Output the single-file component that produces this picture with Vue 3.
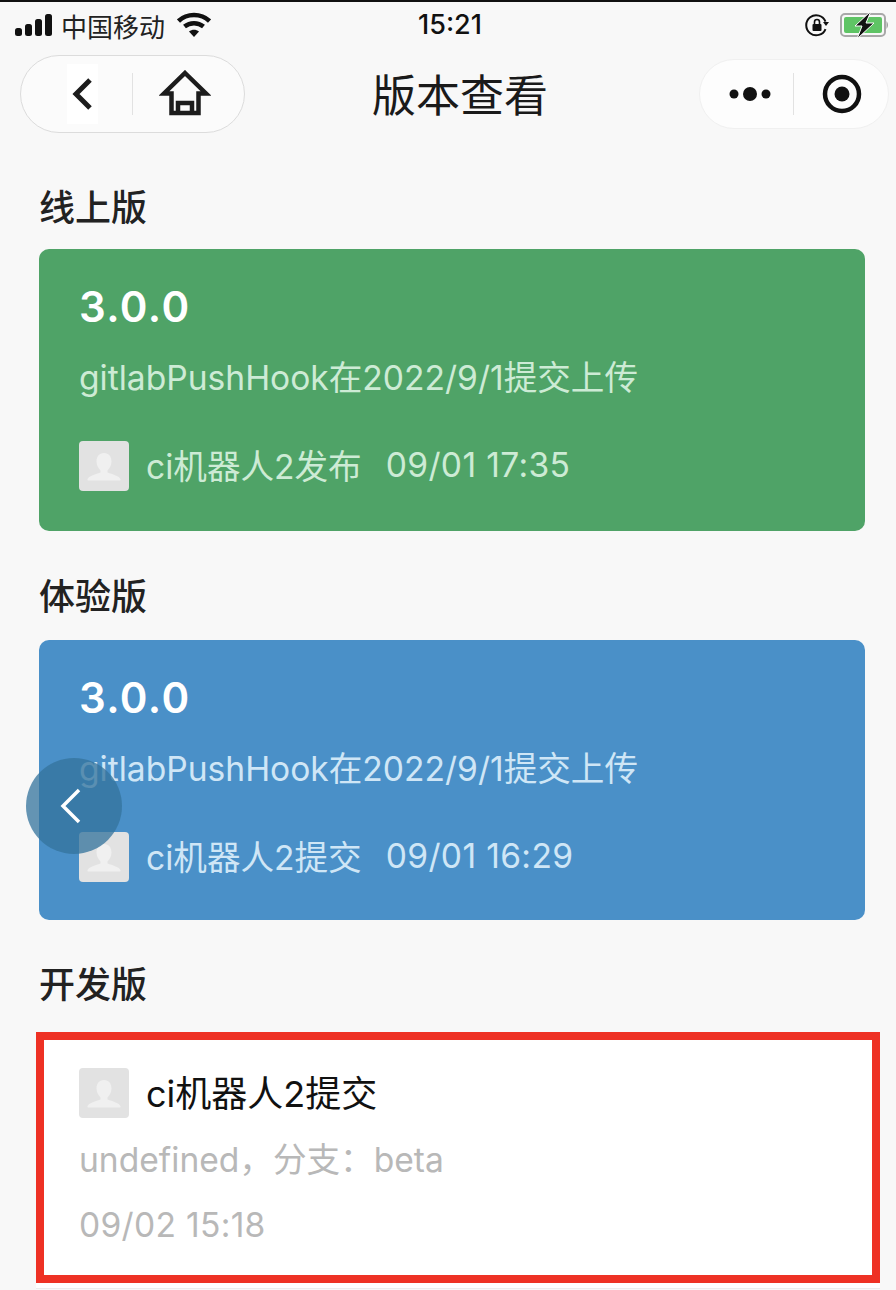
<template>
  <div class="page">
    <div class="status-bar">
      <div class="status-left">
        <svg class="signal" width="38" height="24" viewBox="0 0 38 24">
          <rect x="0" y="15" width="7" height="8" rx="2.5" />
          <rect x="10" y="11" width="7" height="12" rx="2.5" />
          <rect x="20" y="6" width="7" height="17" rx="2.5" />
          <rect x="30" y="1" width="7" height="22" rx="2.5" />
        </svg>
        <span class="carrier">中国移动</span>
        <svg class="wifi" width="34" height="26" viewBox="0 0 34 26">
          <path d="M1.5 9 C10 1 24 1 32.5 9" fill="none" stroke="#111" stroke-width="4.5" />
          <path d="M7.5 14.5 C13 10 21 10 26.5 14.5" fill="none" stroke="#111" stroke-width="4.5" />
          <path d="M12 19.5 C15 17 19 17 22 19.5 L17 25 Z" fill="#111" />
        </svg>
      </div>
      <div class="time">15:21</div>
      <div class="status-right">
        <svg width="24" height="24" viewBox="0 0 24 24">
          <path d="M20.5 8.5 A10 10 0 1 0 20.5 16" fill="none" stroke="#111" stroke-width="2" />
          <path d="M18 9 L24 9 L21 13 Z" fill="#111" />
          <rect x="7.5" y="11" width="9" height="7" rx="1" fill="#111" />
          <path d="M9.5 11 V9 a2.5 2.5 0 0 1 5 0 V11" fill="none" stroke="#111" stroke-width="1.6" />
        </svg>
        <svg class="battery" width="50" height="30" viewBox="0 0 50 30">
          <rect x="1" y="4" width="44" height="22" rx="4" fill="none" stroke="#a8a8a8" stroke-width="2" />
          <rect x="4" y="7" width="38" height="16" rx="2" fill="#5fc465" />
          <path d="M46.5 11 q3 4 0 8 Z" fill="#999" />
          <path d="M31 1 L15 16 H22 L17 29 L34 13 H26 Z" fill="#111" stroke="#fff" stroke-width="1" />
        </svg>
      </div>
    </div>

    <div class="nav-bar">
      <div class="capsule-left">
        <div class="back-patch">
          <svg width="24" height="34" viewBox="0 0 24 34">
            <path d="M19 3 L5 17 L19 31" fill="none" stroke="#1c1c1c" stroke-width="5" />
          </svg>
        </div>
        <div class="capsule-line line-left"></div>
        <svg class="home" width="52" height="46" viewBox="0 0 52 46">
          <path d="M26 3 L47 23.5 H39.5 V43 H12.5 V23.5 H5 Z" fill="none" stroke="#1c1c1c" stroke-width="4.5" stroke-linejoin="miter" />
          <path d="M19 43 V33 H33 V43" fill="none" stroke="#1c1c1c" stroke-width="4.5" />
        </svg>
      </div>
      <div class="nav-title">版本查看</div>
      <div class="capsule-right">
        <svg width="42" height="16" viewBox="0 0 42 16">
          <circle cx="5" cy="8" r="4.5" />
          <circle cx="21" cy="8" r="7" />
          <circle cx="37" cy="8" r="4.5" />
        </svg>
        <div class="capsule-line"></div>
        <svg width="40" height="40" viewBox="0 0 40 40">
          <circle cx="20" cy="20" r="17" fill="none" stroke="#111" stroke-width="4.5" />
          <circle cx="20" cy="20" r="7.5" fill="#111" />
        </svg>
      </div>
    </div>

    <main class="content">
      <section v-for="item in versions" :key="item.title" class="version-block" :class="'block-' + item.type">
        <h2>{{ item.title }}</h2>
        <div class="card" :class="item.type">
          <div class="version">3.0.0</div>
          <div class="desc">gitlabPushHook在2022/9/1提交上传</div>
          <div class="meta">
            <svg class="avatar" viewBox="0 0 50 50">
              <rect width="50" height="50" rx="4" fill="#e2e2e2" />
              <path d="M25 12 c5 0 7.5 4 7.5 8.5 c0 4 -2 7 -4 9 v2 c5 2 11 3 13 6.5 q.5 1.5 -1 1.5 H9.5 q-1.5 0 -1 -1.5 c2 -3.5 8 -4.5 13 -6.5 v-2 c-2 -2 -4 -5 -4 -9 c0 -4.5 2.5 -8.5 7.5 -8.5 Z" fill="#f0f0f0" />
            </svg>
            <span class="meta-who">{{ item.who }}</span>
            <span class="meta-time">{{ item.time }}</span>
          </div>
        </div>
      </section>

      <section class="version-block block-dev">
        <h2>开发版</h2>
        <div class="dev-card">
          <div class="dev-head">
            <svg class="avatar" viewBox="0 0 50 50">
              <rect width="50" height="50" rx="4" fill="#e2e2e2" />
              <path d="M25 12 c5 0 7.5 4 7.5 8.5 c0 4 -2 7 -4 9 v2 c5 2 11 3 13 6.5 q.5 1.5 -1 1.5 H9.5 q-1.5 0 -1 -1.5 c2 -3.5 8 -4.5 13 -6.5 v-2 c-2 -2 -4 -5 -4 -9 c0 -4.5 2.5 -8.5 7.5 -8.5 Z" fill="#f0f0f0" />
            </svg>
            <span class="dev-who">ci机器人2提交</span>
          </div>
          <div class="dev-line">undefined，分支：beta</div>
          <div class="dev-line dev-time">09/02 15:18</div>
        </div>
      </section>
    </main>

    <div class="float-back">
      <svg width="26" height="36" viewBox="0 0 26 36">
        <path d="M20 2 L4 18 L20 34" fill="none" stroke="#fff" stroke-width="3.5" />
      </svg>
    </div>
  </div>
</template>

<script setup>
const versions = [
  { title: '线上版', type: 'online', who: 'ci机器人2发布', time: '09/01 17:35' },
  { title: '体验版', type: 'trial', who: 'ci机器人2提交', time: '09/01 16:29' },
];
</script>

<style>
html,
body {
  margin: 0;
  background: #f8f8f8;
}
</style>

<style scoped>
.page {
  position: relative;
  width: 896px;
  height: 1290px;
  overflow: hidden;
  background: #f8f8f8;
  border-top: 2px solid #111;
  box-sizing: border-box;
  font-family: Inter, "Noto Sans CJK SC", sans-serif;
  color: #111;
}

.status-bar {
  display: flex;
  align-items: center;
  justify-content: space-between;
  height: 46px;
  padding: 0 0 0 15px;
  position: relative;
}

.status-left {
  display: flex;
  align-items: center;
}

.signal {
  fill: #111;
}

.carrier {
  margin-left: 8px;
  font-size: 26px;
  color: #222;
}

.wifi {
  margin-left: 12px;
}

.time {
  position: absolute;
  left: 418px;
  top: 6px;
  font-size: 27px;
  font-weight: 500;
}

.status-right {
  display: flex;
  align-items: center;
  gap: 11px;
  margin-right: 6px;
}

.nav-bar {
  display: flex;
  align-items: center;
  height: 78px;
  margin-top: 7px;
  padding: 0 7px 0 20px;
}

.capsule-left {
  position: relative;
  display: flex;
  align-items: center;
  box-sizing: border-box;
  width: 225px;
  height: 78px;
  border: 1px solid #dcdcdc;
  border-radius: 39px;
  background: #fbfbfb;
}

.back-patch {
  display: flex;
  align-items: center;
  justify-content: center;
  width: 31px;
  height: 60px;
  margin-left: 46px;
  background: #fff;
}

.capsule-line {
  width: 1px;
  height: 42px;
  background: #e2e2e2;
}

.line-left {
  margin-left: 34px;
}

.home {
  margin-left: 26px;
  margin-top: -2px;
}

.nav-title {
  flex: 1;
  padding-right: 24px;
  padding-bottom: 2px;
  text-align: center;
  font-size: 44px;
  color: #1a1a1a;
}

.capsule-right {
  display: flex;
  align-items: center;
  justify-content: space-between;
  box-sizing: border-box;
  width: 190px;
  height: 70px;
  padding: 0 26px 0 29px;
  border: 1px solid #f0f0f0;
  border-radius: 35px;
  background: #fdfdfd;
  fill: #111;
}

.capsule-right .capsule-line {
  margin-right: 6px;
}

.content {
  padding: 0 31px 0 39px;
}

.version-block h2 {
  margin: 0;
  font-size: 36px;
  line-height: 50px;
  font-weight: 500;
  color: #222;
}

.block-online {
  padding-top: 50px;
}

.block-trial {
  padding-top: 41px;
}

.block-dev {
  padding-top: 40px;
}

.card {
  box-sizing: border-box;
  margin-top: 16px;
  padding: 30px 40px 0;
  border-radius: 10px;
}

.card.online {
  height: 282px;
  background: #4fa367;
  color: #cdebd5;
}

.card.trial {
  height: 280px;
  margin-top: 18px;
  background: #4a90c8;
  color: #cfe6f6;
}

.version {
  font-size: 42px;
  line-height: 56px;
  font-weight: 600;
  letter-spacing: 1.4px;
  color: #fff;
}

.desc {
  margin-top: 21px;
  font-size: 33.6px;
  line-height: 44px;
}

.meta {
  display: flex;
  align-items: center;
  height: 50px;
  margin-top: 41px;
  font-size: 33.6px;
}

.avatar {
  width: 50px;
  height: 50px;
  margin-right: 17px;
  flex: none;
}

.meta-who {
  padding-bottom: 3px;
}

.meta-time {
  margin-left: 24px;
  padding-bottom: 3px;
  letter-spacing: 0.35px;
}

.dev-card {
  box-sizing: border-box;
  height: 251px;
  margin: 22px 0 0 -3px;
  width: 844px;
  padding: 28px 35px 0;
  border: 8px solid #ee3124;
  background: #fff;
  box-shadow: 0 5px 0 #fff, 0 6px 0 #ececec;
}

.dev-head {
  display: flex;
  align-items: center;
  height: 50px;
  font-size: 36px;
  color: #111;
}

.dev-who {
  padding-bottom: 5px;
}

.dev-line {
  margin-top: 20px;
  font-size: 33.6px;
  line-height: 44px;
  color: #b8b8b8;
}

.dev-time {
  margin-top: 21px;
  letter-spacing: 0.3px;
}

.float-back {
  position: absolute;
  left: 26px;
  top: 756px;
  display: flex;
  align-items: center;
  justify-content: center;
  width: 96px;
  height: 96px;
  padding-right: 4px;
  box-sizing: border-box;
  border-radius: 50%;
  background: rgba(53, 116, 156, 0.76);
}
</style>
